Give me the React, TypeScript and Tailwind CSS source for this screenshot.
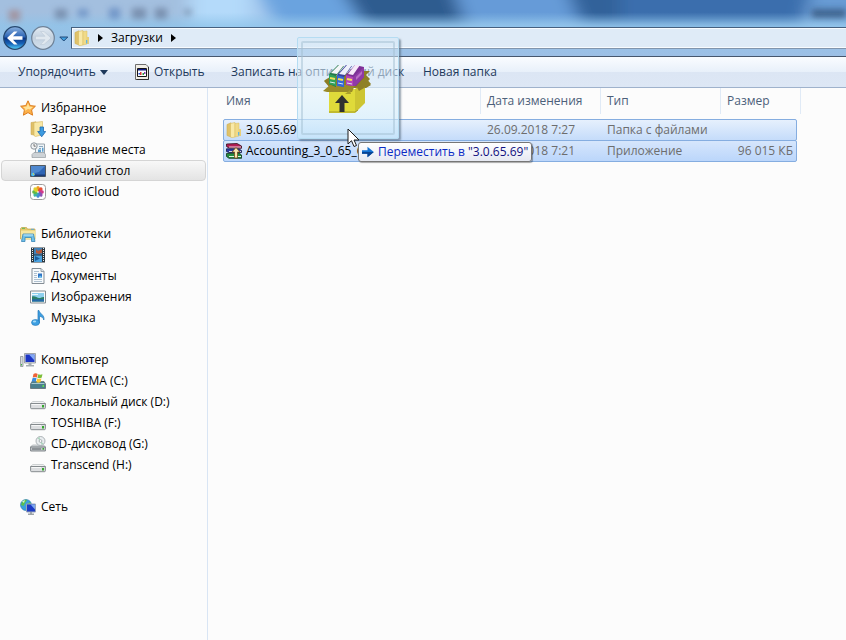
import React from "react";

type IconProps = { children: React.ReactNode; size?: number };

const Icon = ({ children, size = 16 }: IconProps) => (
  <svg width={size} height={size} viewBox="0 0 16 16" className="shrink-0" aria-hidden="true">
    {children}
  </svg>
);

const FolderIcon = () => (
  <Icon>
    <path d="M1 2.500 5 .8v14.200L1 13.500z" fill="#e0c26a" stroke="#cfae52" strokeWidth=".6" />
    <path d="M4.500 1.500 9 .5V15l-3 .7-1.500-.7z" fill="#f8e9a8" stroke="#d9bc62" strokeWidth=".6" />
    <path d="M9 1.500 13 1v13l-4 1z" fill="#f0da88" stroke="#d9bc62" strokeWidth=".5" />
    <path d="M13 7h2v7h-2z" fill="#e9cf78" />
    <path d="M12 10h1.300v3.500H12z" fill="#62b4e0" />
  </Icon>
);

const StarIcon = () => (
  <Icon>
    <path
      d="M8 .8 10.200 5.600 15.400 6.200 11.600 9.900 12.600 15.200 8 12.600 3.400 15.200 4.400 9.900.6 6.200 5.800 5.600z"
      fill="#fdb24a"
      stroke="#dc7d1e"
      strokeWidth="1"
    />
    <path d="M8 3 9.300 6.600 13 7.100 10 9.500 8 9 4.500 11 5.500 9 3 7.100 6.700 6.600z" fill="#ffe39a" />
  </Icon>
);

const DownloadsIcon = () => (
  <Icon>
    <path d="M1 1.500 6 .8v13.700L1 13.500z" fill="#dfc069" stroke="#c4a24a" strokeWidth=".5" />
    <path d="M4 1.500 12.500.5v13.300L5.500 15.500 4 14.600z" fill="#f8e8a5" stroke="#d5b55b" strokeWidth=".6" />
    <path d="M10 6h3.500v4.500h2.200L11.700 15.800 7.700 10.500H10z" fill="#3d9be0" stroke="#1f69b0" strokeWidth=".8" />
  </Icon>
);

const RecentIcon = () => (
  <Icon>
    <path d="M5.500 2h9v10h-9z" fill="#eef4f8" stroke="#9aa4ac" />
    <path d="M9 4.500h4M9 6.500h2" stroke="#8aa6bc" />
    <path d="M8 7.500h3v3H8zM12 5.800h1.500v4H12z" fill="#5a9fd0" />
    <path d="M2 12.500 4 10.500h10l1.500 2v3H2z" fill="#cdd2d6" stroke="#959ca2" strokeWidth=".7" />
    <circle cx="4" cy="4" r="3.200" fill="#f2f3f4" stroke="#8f989f" />
    <path d="M4 2v2.200h1.700" fill="none" stroke="#555" strokeWidth=".8" />
  </Icon>
);

const DesktopIcon = () => (
  <Icon>
    <path d="M.5 2.500h15v11H.5z" fill="#2f65b4" stroke="#52595f" />
    <path d="M1 3h14L9 9 1 11z" fill="#4f88cf" />
    <path d="M3 11.500h12v1.800H3z" fill="#1c3d78" />
    <circle cx="3" cy="11.500" r="1.800" fill="#4fc3f0" />
    <path d="m3 9.700 1.700 1.800H3z" fill="#f4c430" />
  </Icon>
);

const ICLOUD_PETALS = ["#f39a1d", "#e8502f", "#d4398a", "#8b52b5", "#4388d6", "#3fb5a0", "#62b947", "#dccf2e"];

const PhotosIcon = () => (
  <Icon>
    <rect x=".5" y=".5" width="15" height="15" rx="3" fill="#fff" stroke="#9c9c9c" />
    {ICLOUD_PETALS.map((color, i) => (
      <ellipse key={color} cx="8" cy="4.800" rx="1.900" ry="2.700" fill={color} transform={`rotate(${i * 45} 8 8)`} />
    ))}
    <circle cx="8" cy="8" r=".8" fill="#fff" />
  </Icon>
);

const LibrariesIcon = () => (
  <Icon>
    <path d="M.5 2.500 1.500 1.500h5l1 1.500H15v10H.5z" fill="#e3c768" stroke="#c6a548" strokeWidth=".7" />
    <path d="M1 4.500h14.500v9H1z" fill="#f6e6a0" />
    <path d="M2 2.300h3" stroke="#5bb85b" />
    <path d="M11 3.300h3" stroke="#5ba8d8" />
    <path d="M1.500 15.500 3 8h10.500l1.500 7.500h-3.500v-4H5v4z" fill="#6fc0e8" stroke="#3987b8" strokeWidth=".8" />
    <path d="M3.500 9h9.500" stroke="#c5e9f8" />
  </Icon>
);

const VideoIcon = () => (
  <Icon>
    <path d="M1 .5h14v15H1z" fill="#2b3740" />
    <path d="M4 1h8v6.500H4z" fill="#3f80b8" />
    <path d="M4 8.500h8V15H4z" fill="#4aa2e0" />
    <path d="m6 2 2 2 4-2v4l-3 1-3-1z" fill="#b4593b" />
    <path d="m5 9 5 2.500L5 14z" fill="#1b5d9c" />
    <path d="M2.500 1v14M13.500 1v14" stroke="#e6ecef" strokeDasharray="1 1" />
  </Icon>
);

const DocumentsIcon = () => (
  <Icon>
    <path d="M2 .5h9l3 3v12H2z" fill="#f7fafc" stroke="#848d95" />
    <path d="M11 .5v3h3" fill="#dce4ea" stroke="#848d95" strokeWidth=".8" />
    <path d="M4 3.500h5M4 5.500h3M4 7.500h3M4 9.500h3M4 11.500h8M4 13.500h8" stroke="#9db2c4" strokeWidth=".8" />
    <path d="M8 5.500h4v4.500H8z" fill="#2f74c4" />
    <path d="m8 10 2-2.500L12 9v1z" fill="#74c3ee" />
  </Icon>
);

const PicturesIcon = () => (
  <Icon>
    <path d="M.5 2h15v12H.5z" fill="#fafafa" stroke="#868d92" />
    <path d="M2 4h12v8.500H2z" fill="#8fd0ee" />
    <path d="M2 7.500c3-1 5 1.500 7 1.500s3-1.300 5-1v4.500H2z" fill="#2c8068" />
    <path d="M2 10.500c4-1 8 .5 12-.5v2.500H2z" fill="#2468a8" />
    <path d="M2 5.500h6" stroke="#e8f7fd" />
  </Icon>
);

const MusicIcon = () => (
  <Icon>
    <path d="M8 .5h1c.8 3.500 6 4.500 4.800 9.500-.6-2.500-2.300-3.500-4.300-3.700V13H8z" fill="#3d9fe2" stroke="#2277b8" strokeWidth=".7" />
    <ellipse cx="5.500" cy="12.500" rx="4" ry="3" fill="#3d9fe2" stroke="#2277b8" strokeWidth=".6" />
    <ellipse cx="4.500" cy="11.600" rx="1.700" ry="1" fill="#a5dbf8" />
  </Icon>
);

const ComputerIcon = () => (
  <Icon>
    <path d="M.5 4.500h2.500v10H.5z" fill="#d5d9dc" stroke="#8b9298" strokeWidth=".8" />
    <path d="M1 12h1v1.500H1z" fill="#47b549" />
    <path d="M4.500 1.500h11v9.500h-11z" fill="#d9dde0" stroke="#8b9298" strokeWidth=".8" />
    <path d="M5.500 2.500h9V10h-9z" fill="#1c35c4" />
    <path d="M9 2.500h5.500v6z" fill="#83a9f4" />
    <path d="M8.500 11h3v2H14v1.500H6V13h2.500z" fill="#a6adb2" />
  </Icon>
);

const DriveBody = () => (
  <>
    <path d="M2.800 7.500h10.400L15.500 9.500H.5z" fill="#f0f1f2" stroke="#b4b8bb" strokeWidth=".6" />
    <path d="M.6 9.500h14.800v4.200q0 1-1 1H1.600q-1 0-1-1z" fill="#dcdee0" stroke="#7c8286" strokeWidth=".9" />
    <path d="M1.500 10.500h9.500" stroke="#f7f8f8" />
    <path d="M12 11h2v2.500h-2z" fill="#35a82e" />
  </>
);

const DriveIcon = () => (
  <Icon>
    <DriveBody />
  </Icon>
);

const SystemDriveIcon = () => (
  <Icon>
    <path d="M2 8.500h12l1.500 2.500v4.500H.5V11z" fill="#4a7f8e" stroke="#5d6b72" strokeWidth=".8" />
    <path d="M1.500 10.500h13" stroke="#a8c8d0" />
    <path d="M12.500 12h1.500v2h-1.500z" fill="#5ee04e" />
    <path d="M3.500 1c1.500-1 3-.8 4.200-.1L6.800 4.500C5.500 3.800 4.200 3.800 2.700 4.500z" fill="#ee6338" />
    <path d="M8.300 1.200c1.300.7 2.700.6 4.200 0l-.9 3.600c-1.500.7-2.900.6-4.200 0z" fill="#7cbf3b" />
    <path d="M2.500 5.200c1.500-.7 2.900-.6 4.100.1L5.700 8.800C4.400 8 3 8 1.600 8.700z" fill="#3a8de0" />
    <path d="M7.200 5.600c1.300.7 2.700.6 4.200 0l-.9 3.600c-1.500.6-2.900.6-4.200 0z" fill="#fbc732" />
  </Icon>
);

const CdDriveIcon = () => (
  <Icon>
    <path d="M2.500 9h11L15.500 11H.5z" fill="#dcdfe1" stroke="#989da1" strokeWidth=".6" />
    <path d="M.6 11h14.800v4H.6z" fill="#c5c9cc" stroke="#777d82" strokeWidth=".9" />
    <path d="M2 13h9" stroke="#555b60" />
    <path d="M12.500 12h1.500v1.800h-1.500z" fill="#35a82e" />
    <circle cx="10.500" cy="5" r="4.500" fill="#e9edef" stroke="#9aa1a6" strokeWidth=".8" />
    <path d="M10.500 5 7.500 2.200 9.500 1zM10.500 5l3 2.800-2 1z" fill="#a9d5bb" />
    <circle cx="10.500" cy="5" r="1.400" fill="#fff" stroke="#8e969b" strokeWidth=".7" />
  </Icon>
);

const NetworkIcon = () => (
  <Icon>
    <circle cx="6" cy="6" r="5.500" fill="#3aa0dd" stroke="#2876ac" strokeWidth=".6" />
    <path d="M2 3c2-2.500 4-2.500 5-2L5 4 3.500 7 1 6zM6 6l4-3 1.500 3-3 3z" fill="#5cc24a" />
    <path d="M2 2.500 5 1 4 4z" fill="#d5f4cb" />
    <path d="M6.500 5h9v8h-9z" fill="#1c3bc4" stroke="#9aa5b8" />
    <path d="M10.500 5.500H15v5z" fill="#7ba6f0" />
    <path d="M10 13h2v1.500h2V16H8v-1.500h2z" fill="#9da4aa" />
  </Icon>
);

const AppWindowIcon = () => (
  <Icon>
    <path d="M1.500.5h10.500l2.500 2.500v12.500h-13z" fill="#f1eee6" stroke="#6e6e6e" />
    <path d="M14.500 3v12.500h-12" fill="none" stroke="#303030" />
    <path d="M3.500 4.500h9v8h-9z" fill="#fff" stroke="#151515" />
    <path d="M4 5h8v1.500H4z" fill="#101c84" />
    <path d="M4.500 9h1.500v1.500H4.500z" fill="#2c4cd4" />
    <path d="M6 8h1.500v3H6z" fill="#d63a38" />
    <path d="M8.500 9H10v2H8.500z" fill="#2e9d3a" />
    <path d="M10 8h1.500v2H10z" fill="#8d3db0" />
  </Icon>
);

const ArchiveIcon = () => (
  <Icon>
    <path d="M.5 1 11 .5 15.500 3v2.300L3 5 .5 3.500z" fill="#b21d55" stroke="#33101d" strokeWidth=".8" />
    <path d="M3 4h12" stroke="#fff" strokeWidth=".8" />
    <path d="M.5 5.800 13 6l2.500 1.500v2L3 9.500.5 8.500z" fill="#2c3ba8" stroke="#141a44" strokeWidth=".8" />
    <path d="M3 8.500h12" stroke="#fff" strokeWidth=".8" />
    <path d="M.5 10.500 13 10l2.500 2v3.300H3L.5 13.500z" fill="#228a3e" stroke="#103218" strokeWidth=".8" />
    <path d="M3 13.500h12" stroke="#dff3e0" />
    <path d="M6 9 10 4.500 14 9h-2.500v6H8.500V9z" fill="#f6e7b1" stroke="#744d17" strokeWidth=".8" />
  </Icon>
);

// Open box with three books, an arrow on the front side
const GhostIcon = () => (
  <svg width="48" height="52" viewBox="0 0 48 52" className="shrink-0" aria-hidden="true">
    <path d="M2 17 7 14 34 8h13l-4 4 4 4-3 3 4 3-5 3H7L1 18z" fill="#8c7d25" />
    <path d="M6 26h26v24H6z" fill="#dfda3a" />
    <path d="M32 26 42 18v22L32 50z" fill="#cdc532" />
    <path d="M6 49h26l3-2" fill="none" stroke="#a39c28" />
    <path d="M0 28 7 22h25l-3 7H4z" fill="#9a8b28" />
    <path d="M32 21 43 15l5 6-12 7z" fill="#8f8026" />
    <path d="m22 31 5-4 1 4z" fill="#aaa02c" />
    <path d="M6 11 15 2l6 1-8 10v11l-7-3z" fill="#27774a" />
    <path d="M8 10 16 2h5l-7 9z" fill="#f4f6f8" />
    <path d="M6 11 13 13v10l-7-2z" fill="#2fa25a" />
    <path d="M14 12 23 2l6 1-8 11v10l-7-2z" fill="#3b3f9a" />
    <path d="M16 11 24 2h5l-7 10z" fill="#eff1fb" />
    <path d="M14 12 21 14v10l-7-1z" fill="#3468d8" />
    <path d="M23 12 32 2l9 2v10l-8 9-10-1z" fill="#7d3096" />
    <path d="M25 11 32 2h5l-7 10z" fill="#f6e9f8" />
    <path d="M23 12 30 14v9l-7-1z" fill="#b442b8" />
    <path d="M30 14 41 4v10l-9 9h-2z" fill="#8f3aa6" />
    <path d="m33 14 6-6v3l-6 6z" fill="#b96cc6" />
    <path d="m7 15 5 1M15 16l5 1M24 16l5 1" stroke="#f0e05a" strokeWidth="2" />
    <path d="m7 19 5 1M15 20l5 1M24 20l5 1" stroke="#d8e8f0" strokeWidth="1" />
    <path d="M12 40 19 32l7 8h-4.500v9h-5v-9z" fill="#2f3030" />
  </svg>
);

const NAV_GROUPS = [
  {
    label: "Избранное",
    icon: <StarIcon />,
    items: [
      { label: "Загрузки", icon: <DownloadsIcon /> },
      { label: "Недавние места", icon: <RecentIcon /> },
      { label: "Рабочий стол", icon: <DesktopIcon />, active: true },
      { label: "Фото iCloud", icon: <PhotosIcon /> },
    ],
  },
  {
    label: "Библиотеки",
    icon: <LibrariesIcon />,
    items: [
      { label: "Видео", icon: <VideoIcon /> },
      { label: "Документы", icon: <DocumentsIcon /> },
      { label: "Изображения", icon: <PicturesIcon /> },
      { label: "Музыка", icon: <MusicIcon /> },
    ],
  },
  {
    label: "Компьютер",
    icon: <ComputerIcon />,
    items: [
      { label: "СИСТЕМА (C:)", icon: <SystemDriveIcon /> },
      { label: "Локальный диск (D:)", icon: <DriveIcon /> },
      { label: "TOSHIBA (F:)", icon: <DriveIcon /> },
      { label: "CD-дисковод (G:)", icon: <CdDriveIcon /> },
      { label: "Transcend (H:)", icon: <DriveIcon /> },
    ],
  },
  { label: "Сеть", icon: <NetworkIcon />, items: [] },
];

const FILES = [
  { name: "3.0.65.69", icon: <FolderIcon />, date: "26.09.2018 7:27", type: "Папка с файлами", size: "" },
  { name: "Accounting_3_0_65_69", icon: <ArchiveIcon />, date: "26.09.2018 7:21", type: "Приложение", size: "96 015 КБ" },
];

// Wallpaper and window behind the frame, seen through the glass
const GlassBackdrop = () => (
  <svg
    className="absolute inset-0 h-full w-full"
    viewBox="0 0 846 56"
    preserveAspectRatio="none"
    aria-hidden="true"
  >
    <defs>
      <filter id="soft" x="-20%" y="-50%" width="140%" height="200%">
        <feGaussianBlur stdDeviation="9 5" />
      </filter>
      <filter id="smudge" x="-50%" y="-50%" width="200%" height="200%">
        <feGaussianBlur stdDeviation="3" />
      </filter>
      <linearGradient id="lower" x1="0" y1="0" x2="0" y2="1">
        <stop offset=".22" stopColor="#8fc4ea" stopOpacity="0" />
        <stop offset=".46" stopColor="#8fc4ea" stopOpacity=".75" />
        <stop offset="1" stopColor="#9dbfe5" />
      </linearGradient>
    </defs>
    <path d="M0 0h846v56H0z" fill="#a5c9ee" />
    <g filter="url(#soft)">
      <path d="M-20-20h210v60H-20z" fill="#a3bfdf" />
      <path d="M190-20h60v60h-60z" fill="#b4dafa" />
      <path d="M252-20h110v45h-85z" fill="#6ba3df" />
      <path d="M335-20h120l15 46H365z" fill="#2e5b8f" />
      <path d="M450-20h120l12 44H465z" fill="#669bd8" />
      <path d="M563-20h250l-8 46H580z" fill="#3a6ead" />
      <path d="M560-20h60v42h-36z" fill="#33629a" />
      <path d="M810-20h60v44h-60z" fill="#679bd4" />
    </g>
    <path d="M0 0h846v56H0z" fill="url(#lower)" />
    <g filter="url(#smudge)" opacity=".55">
      <path d="M9 10h11v11H9z" fill="#a3716c" />
      <path d="M55 9h12v10H55zM132 8h14v11h-14zM155 8h12v11h-12z" fill="#586a89" />
      <path d="M78 9h10v8H78zM109 8h11v11h-11z" fill="#4c76b5" />
      <path d="m183 10h10l-5 6z" fill="#42546f" />
      <path d="M812 9h34v9h-34z" fill="#1d3554" />
    </g>
  </svg>
);

const AddressBar = () => (
  <header className="relative h-[57px] overflow-hidden border-b border-[#46566d] pt-[26px]">
    <GlassBackdrop />
    <nav className="relative flex h-6 items-center" aria-label="Адрес">
      <div className="flex items-center gap-1 pl-[3px]">
        <button type="button" aria-label="Назад" className="size-6 rounded-full">
          <svg viewBox="0 0 24 24" aria-hidden="true">
            <defs>
              <linearGradient id="back" x1="0" y1="0" x2="0" y2="1">
                <stop offset="0" stopColor="#8ab1df" />
                <stop offset=".46" stopColor="#2b63b4" />
                <stop offset=".5" stopColor="#0a3383" />
                <stop offset=".75" stopColor="#1763b8" />
                <stop offset="1" stopColor="#55d3fa" />
              </linearGradient>
            </defs>
            <circle cx="12" cy="12" r="11.300" fill="url(#back)" stroke="#27486f" strokeWidth="1.200" />
            <path d="M4 12 11 5.500h3.500L10 10.300H19.500v3.400H10L14.500 18.500H11z" fill="#fff" />
          </svg>
        </button>
        <button type="button" aria-label="Вперёд" className="size-6 rounded-full">
          <svg viewBox="0 0 24 24" aria-hidden="true">
            <defs>
              <linearGradient id="forward" x1="0" y1="0" x2="0" y2="1">
                <stop offset="0" stopColor="#e3ebf3" />
                <stop offset=".5" stopColor="#c3d1df" />
                <stop offset="1" stopColor="#d3e1ee" />
              </linearGradient>
            </defs>
            <circle cx="12" cy="12" r="11.300" fill="url(#forward)" stroke="#6f8297" strokeWidth="1.200" />
            <path
              d="M20 12 13 5.500H9.500L14 10.300H4.500v3.400H14L9.500 18.500H13z"
              fill="#e0e8ef"
              stroke="#b8c5d2"
              strokeWidth=".5"
            />
          </svg>
        </button>
        <button type="button" aria-label="Последние страницы" className="h-6 w-3">
          <svg viewBox="0 0 12 24" aria-hidden="true">
            <path d="M.8 11h8l-4 4z" fill="#3f9fe0" stroke="#234a78" />
          </svg>
        </button>
      </div>
      <div className="flex h-[22px] flex-1 items-center border border-r-0 border-[#45607f] border-b-[#8195ad] bg-[#dfebf7] pl-0.5 shadow-[inset_0_1px_#f8fbfe,inset_1px_-1px_#f8fbfe]">
        <FolderIcon />
        <svg width="21" height="10" viewBox="0 0 21 10" aria-hidden="true">
          <path d="M8 1v8l5-4z" fill="#000" />
        </svg>
        <button type="button" className="leading-5 text-black">
          Загрузки
        </button>
        <svg width="21" height="10" viewBox="0 0 21 10" aria-hidden="true">
          <path d="M8 1v8l5-4z" fill="#000" />
        </svg>
      </div>
    </nav>
  </header>
);

const Toolbar = () => (
  <div
    role="toolbar"
    className="flex h-[31px] items-center border-b border-[#9fb2cc] bg-[linear-gradient(#fafcff,#e8f0fa_50%,#dce6f4_50%,#dde7f5)] pl-[18px] text-[#1e395b]"
  >
    <button type="button" className="flex w-[116px] items-center gap-1">
      Упорядочить
      <svg width="8" height="5" viewBox="0 0 8 5" aria-hidden="true">
        <path d="M0 0h8L4 5z" fill="#1e395b" />
      </svg>
    </button>
    <button type="button" className="flex w-[97px] items-center gap-1">
      <AppWindowIcon />
      Открыть
    </button>
    <button type="button" className="w-48 text-left whitespace-nowrap">
      Записать на оптический диск
    </button>
    <button type="button" className="whitespace-nowrap">
      Новая папка
    </button>
  </div>
);

const Sidebar = () => (
  <aside className="flex w-52 shrink-0 flex-col gap-[21px] border-r border-[#d9e5f4] pt-[9px]">
    {NAV_GROUPS.map((group) => (
      <ul key={group.label}>
        <li>
          <a href="#" className="flex h-[21px] items-center gap-[5px] pl-5">
            {group.icon}
            {group.label}
          </a>
        </li>
        {group.items.map((item) => (
          <li key={item.label} className="px-px">
            <a
              href="#"
              className={
                "active" in item && item.active
                  ? "flex h-[21px] items-center gap-[5px] rounded-sm border border-[#d5d5d5] bg-linear-to-b from-[#f8f8f8] to-[#e4e4e4] pl-7"
                  : "flex h-[21px] items-center gap-[5px] pl-[29px]"
              }
            >
              {item.icon}
              {item.label}
            </a>
          </li>
        ))}
      </ul>
    ))}
  </aside>
);

const FileTable = () => (
  <table className="block">
    <thead className="block">
      <tr className="grid grid-cols-[273px_120px_120px_80px] text-left text-[#4c607a]">
        {["Имя", "Дата изменения", "Тип", "Размер"].map((title) => (
          <th
            key={title}
            scope="col"
            className="h-[26px] border-r border-[#e0eaf6] pl-1.5 leading-[26px] font-normal first:pl-[18px]"
          >
            {title}
          </th>
        ))}
      </tr>
    </thead>
    <tbody className="block pt-[5px] pl-[15px]">
      {FILES.map((file) => (
        <tr
          key={file.name}
          className="-mb-px grid h-[22px] w-[574px] grid-cols-[257px_120px_120px_1fr] items-center rounded-xs border border-[#85ade0] bg-linear-to-b from-[#e6f0fd] to-[#c5dcfa] text-[#6d6d6d] last:from-[#d6e6fc] last:to-[#bbd6fb]"
        >
          <td className="flex items-center gap-1 pl-0.5 text-black">
            {file.icon}
            {file.name}
          </td>
          <td className="pl-1.5">{file.date}</td>
          <td className="pl-1.5">{file.type}</td>
          <td className="pr-[3px] text-right">{file.size}</td>
        </tr>
      ))}
    </tbody>
  </table>
);

const DragGhost = () => (
  <div className="pointer-events-none absolute top-[37px] left-[297px]">
    <div className="h-[102px] w-[102px] rounded-xs border border-[#b5dcf2] bg-linear-to-b from-[#d3e7f6]/50 via-[#e4f4fd]/60 to-[#c6e7fa]/65 p-[3px] shadow-[2px_2px_2px_#53677b99]">
      <div className="flex h-full justify-start rounded-xs border-2 border-[#a3bfd2]/50 pt-5 pl-5">
        <GhostIcon />
      </div>
    </div>
    <svg width="14" height="20" viewBox="0 0 14 20" className="absolute top-[91px] left-[50px]" aria-hidden="true">
      <path d="M1 1v15l3.500-3.300L7 18.500l2.500-1L7 12h5z" fill="#fff" stroke="#1a1a1a" />
    </svg>
    <div
      role="tooltip"
      className="absolute top-[105px] left-[61px] flex h-5 items-center gap-1 rounded-[3px] border border-[#767676] bg-linear-to-b from-white to-[#e6e9f2] px-[3px] whitespace-nowrap text-[#0b2bc4] shadow-[1px_1px_1px_#00000055]"
    >
      <svg width="12" height="12" viewBox="0 0 12 12" aria-hidden="true">
        <path d="M0 4.300h5.500V.8L11.800 6 5.500 11.200V7.700H0z" fill="#1473d4" />
        <path d="M0 6h11.800L5.500 11.200V7.700H0z" fill="#0a4391" />
      </svg>
      <span>
        Переместить в <span className="text-[#101080]">"3.0.65.69"</span>
      </span>
    </div>
  </div>
);

export default function App() {
  return (
    <div className="relative flex min-h-screen flex-col overflow-hidden bg-[#fcfcfc] font-['Open_Sans','Noto_Sans',sans-serif] text-xs text-black">
      <AddressBar />
      <Toolbar />
      <main className="flex flex-1">
        <Sidebar />
        <FileTable />
      </main>
      <DragGhost />
    </div>
  );
}
